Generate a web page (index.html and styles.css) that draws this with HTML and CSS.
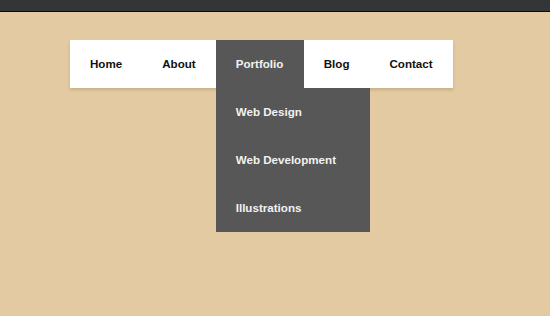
FILE: index.html
```html
<!DOCTYPE html>
<html>
<head>
    <meta charset="UTF-8">
    <meta name="viewport" content="width=device-width, initial-scale=1.0">
    <title>Dropdown Menu</title>
    <link rel="stylesheet" href="styles.css">
</head>
<body>
    <div class="topbar"></div>
    <div class="wrap">
        <nav class="nav">
            <div class="item"><a href="#">Home</a></div>
            <div class="item"><a href="#">About</a></div>
            <div class="item active">
                <a href="#">Portfolio</a>
                <div class="submenu">
                    <a href="#">Web Design</a>
                    <a href="#">Web Development</a>
                    <a href="#">Illustrations</a>
                </div>
            </div>
            <div class="item"><a href="#">Blog</a></div>
            <div class="item"><a href="#">Contact</a></div>
        </nav>
    </div>
</body>
</html>
```
FILE: styles.css
```css
html, body {
    height: 100%;
}
body {
    margin: 0;
    background: #e4caa2;
    font-family: "Liberation Sans", Arial, sans-serif;
    font-size: 11.6px;
    font-weight: bold;
}
.topbar {
    height: 11px;
    background: #333539;
    border-bottom: 1px solid #0c0c0c;
}
.wrap {
    padding: 28px 0 0 70px;
}
.nav {
    display: inline-flex;
    align-items: flex-start;
    height: 48px;
    background: #fff;
    box-shadow: 0 2px 3px rgba(120, 90, 50, 0.25);
}
.item a {
    display: block;
    padding: 0 20px;
    line-height: 48px;
    color: #111;
    text-decoration: none;
    white-space: nowrap;
}
.active a {
    background: #575757;
    color: #f2f2f2;
}
.submenu {
    position: relative;
    z-index: 1;
    width: 154px;
    margin-right: -66px;
    background: #575757;
}
```
